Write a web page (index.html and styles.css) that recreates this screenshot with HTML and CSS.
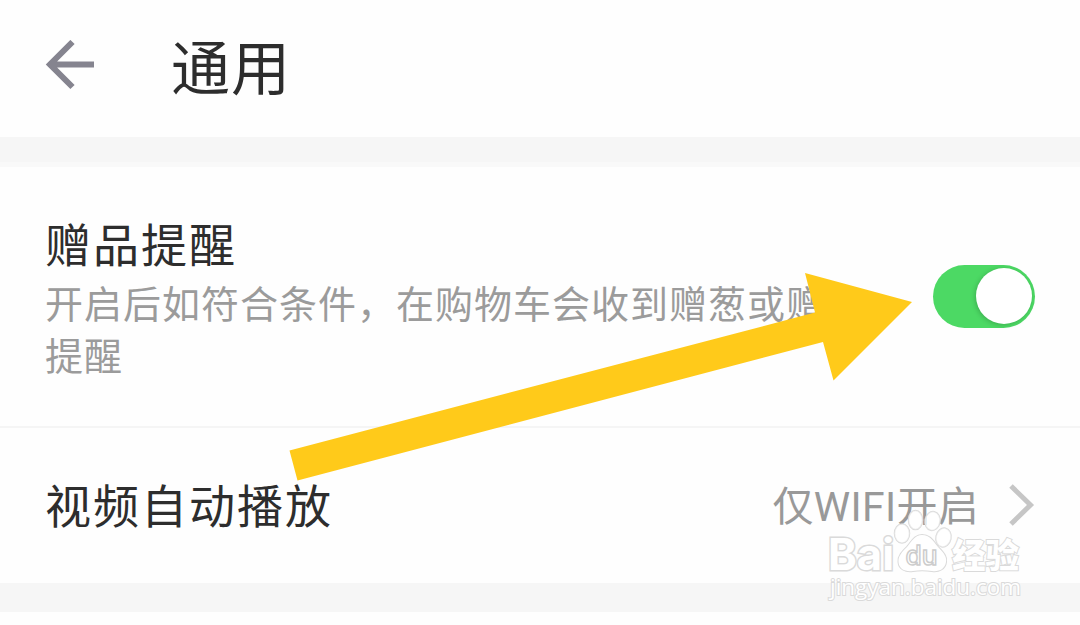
FILE: index.html
```html
<!DOCTYPE html>
<html lang="zh-CN">
<head>
    <meta charset="UTF-8">
    <meta name="viewport" content="width=device-width, initial-scale=1.0">
    <title>通用</title>
    <link rel="stylesheet" href="styles.css">
</head>
<body>
    <header class="header">
        <svg class="back-icon" width="50" height="50" viewBox="0 0 50 50">
            <path d="M27.5 2 L5 24.5 L27.5 47 M5 24.5 H49" fill="none" stroke="#85848f" stroke-width="6"/>
        </svg>
        <h1>通用</h1>
    </header>

    <main class="settings">
        <div class="setting gift">
            <div class="setting-text">
                <h2>赠品提醒</h2>
                <p>开启后如符合条件，在购物车会收到赠葱或赠品提醒</p>
            </div>
            <div class="switch"><div class="knob"></div></div>
        </div>

        <div class="setting video">
            <h2>视频自动播放</h2>
            <div class="value">
                <span>仅WIFI开启</span>
                <svg class="chevron" width="26" height="42" viewBox="0 0 26 42">
                    <path d="M2 2 L21.5 21 L2 40" fill="none" stroke="#c6c6c6" stroke-width="5"/>
                </svg>
            </div>
        </div>
    </main>

    <svg class="arrow" width="1080" height="625" viewBox="0 0 1080 625">
        <polygon points="289.5,450.5 815,312.5 805,273 912,302 833.5,380.5 823,342 297.5,480.5" fill="#ffca1a"/>
    </svg>

    <svg class="watermark" width="220" height="120" viewBox="820 500 220 120">
        <g class="mark">
            <text class="bai" x="828" y="569.5" textLength="66" lengthAdjust="spacingAndGlyphs">Bai</text>
            <g class="toes">
                <ellipse cx="902" cy="533.5" rx="7.5" ry="9.5"/>
                <ellipse cx="915.5" cy="520" rx="7" ry="9.5"/>
                <ellipse cx="932.5" cy="521" rx="7.5" ry="9.5" transform="rotate(10 932.5 521)"/>
                <ellipse cx="943.5" cy="537.5" rx="7.5" ry="9.5" transform="rotate(12 943.5 537.5)"/>
            </g>
            <path d="M922 535 C930 535 933 541 938 547 C944 553 947 557 946 562 C945 569 939 572 932 571 C925 570 919 570 913 571 C905 572 899 569 898.5 562 C898 556 902 552 907 547 C912 541 915 535 922 535 Z"/>
            <text class="jy" x="952" y="567.5" textLength="67" lengthAdjust="spacingAndGlyphs">经验</text>
            <text class="site" x="830" y="595" textLength="191" lengthAdjust="spacingAndGlyphs">jingyan.baidu.com</text>
        </g>
        <text class="du" x="905.5" y="565" textLength="32" lengthAdjust="spacingAndGlyphs">du</text>
    </svg>
</body>
</html>
```
FILE: styles.css
```css
body {
    font-family: Roboto, 'Noto Sans CJK SC', sans-serif;
    margin: 0;
    height: 625px;
    overflow: hidden;
    position: relative;
    background-color: #fefefe;
    color: #2d2d2d;
}

h1, h2, p {
    margin: 0;
    font-weight: 400;
}

.header {
    display: flex;
    align-items: center;
    height: 136.5px;
    padding-left: 45px;
    box-sizing: border-box;
}

.back-icon {
    margin-bottom: 7px;
}

h1 {
    font-size: 59px;
    line-height: 70px;
    letter-spacing: 1px;
    margin-left: 76px;
    margin-top: 3px;
}

.settings {
    border-top: 25px solid #f6f6f6;
    border-bottom: 29px solid #f6f6f6;
}

.setting {
    display: flex;
    justify-content: space-between;
    box-sizing: border-box;
    padding: 0 45px;
}

.gift {
    height: 266px;
    padding-top: 56px;
    border-top: 5px solid #f9f9f9;
    border-bottom: 2px solid #f5f5f5;
}

h2 {
    font-size: 46px;
    line-height: 56px;
    letter-spacing: 2px;
}

.gift h2 {
    margin-top: -5px;
}

.setting-text {
    width: 830px;
}

.setting-text p {
    margin-top: 5px;
    color: #9b9b9b;
    font-size: 38px;
    line-height: 52px;
    letter-spacing: 1px;
}

.switch {
    width: 102px;
    height: 63px;
    margin-top: 42px;
    padding: 3px;
    box-sizing: border-box;
    display: flex;
    justify-content: flex-end;
    border-radius: 32px;
    background-color: #4cd964;
}

.knob {
    width: 56px;
    height: 56px;
    border-radius: 50%;
    background-color: #fff;
    box-shadow: -1px 1px 5px rgba(0,0,0,0.2);
}

.video {
    height: 155px;
    align-items: center;
}

.video h2 {
    padding-top: 4px;
}

.value {
    display: flex;
    align-items: center;
    gap: 30px;
    color: #999;
    font-size: 41px;
    letter-spacing: 0.3px;
}

.value span {
    margin-top: -4px;
}

.arrow {
    position: absolute;
    top: 0;
    left: 0;
}

.watermark {
    position: absolute;
    top: 500px;
    left: 820px;
}

.mark {
    fill: #fff;
    stroke: #dadada;
    stroke-width: 2px;
    paint-order: stroke;
}

.toes {
    fill: rgba(255,255,255,0.5);
    stroke-width: 1.5px;
}

.bai {
    font: 700 44px Inter, sans-serif;
    stroke-width: 3px;
}

.jy {
    font: 900 34px 'Noto Sans CJK SC', sans-serif;
}

.site {
    font: 500 22px 'Open Sans', sans-serif;
}

.du {
    font: 500 27px Inter, sans-serif;
    fill: #fff;
    stroke: #ccc;
    stroke-width: 1.5px;
}
```
